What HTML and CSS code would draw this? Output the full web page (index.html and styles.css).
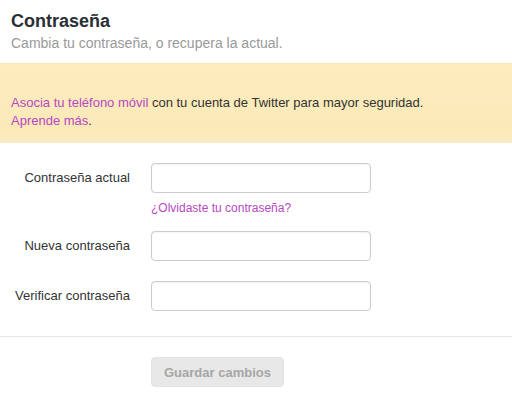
FILE: index.html
```html
<!DOCTYPE html>
<html lang="es">
<head>
    <meta charset="UTF-8">
    <meta name="viewport" content="width=device-width, initial-scale=1.0">
    <title>Contraseña</title>

    <link rel="stylesheet" href="styles.css">
</head>
<body>
    <div class="header">
        <h2>Contraseña</h2>
        <p class="subtitle">Cambia tu contraseña, o recupera la actual.</p>
    </div>

    <div class="banner">
        <a href="#">Asocia tu teléfono móvil</a> con tu cuenta de Twitter para mayor seguridad.<br>
        <a href="#">Aprende más</a>.
    </div>

    <form class="settings">
        <div class="row">
            <label for="current">Contraseña actual</label>
            <div class="field">
                <input type="password" id="current">
                <a href="#" class="hint">¿Olvidaste tu contraseña?</a>
            </div>
        </div>
        <div class="row">
            <label for="new">Nueva contraseña</label>
            <div class="field">
                <input type="password" id="new">
            </div>
        </div>
        <div class="row">
            <label for="verify">Verificar contraseña</label>
            <div class="field">
                <input type="password" id="verify">
            </div>
        </div>
    </form>

    <div class="actions">
        <button type="button" disabled>Guardar cambios</button>
    </div>
</body>
</html>
```

FILE: styles.css
```css
* {
    font-family: "Liberation Sans", Arial, Helvetica, sans-serif;
    box-sizing: border-box;
}

body {
    margin: 0;
    background-color: #fff;
    color: #333;
    font-size: 13px;
    line-height: 18px;
}

a {
    color: #b747c2;
    text-decoration: none;
}

.header {
    padding: 10px 11px 11px;
}

.header h2 {
    margin: 0;
    font-size: 18px;
    line-height: 22px;
    color: #292f33;
}

.subtitle {
    margin: 2px 0 0;
    font-size: 14px;
    color: #999;
}

.banner {
    padding: 30px 11px 13px;
    border-top: 1px solid #f6e8bf;
    background: linear-gradient(#fcecbe, #fbe9b8 85%, #fbecc6);
    color: #333;
}

.settings {
    margin: 0;
    padding: 20px 0 25px;
    border-bottom: 1px solid #e8e8e8;
    display: flex;
    flex-direction: column;
    gap: 20px;
}

.row {
    display: flex;
    align-items: flex-start;
}

.row label {
    width: 130px;
    margin-right: 21px;
    text-align: right;
    line-height: 30px;
    color: #333;
}

.field {
    display: flex;
    flex-direction: column;
}

.field input {
    width: 220px;
    height: 30px;
    margin: 0;
    border: 1px solid #ccc;
    border-radius: 4px;
    box-shadow: inset 0 1px 2px rgba(0, 0, 0, 0.05);
    background-color: #fff;
}

.hint {
    margin: 7px 0 -5px;
    line-height: 16px;
    font-size: 12px;
}

.actions {
    padding: 20px 0 0 151px;
}

button {
    height: 30px;
    padding: 0 12px;
    border: 1px solid #e3e3e3;
    border-radius: 4px;
    background-color: #e8e8e8;
    color: #a6a6a6;
    font-size: 13px;
    font-weight: bold;
}
```
